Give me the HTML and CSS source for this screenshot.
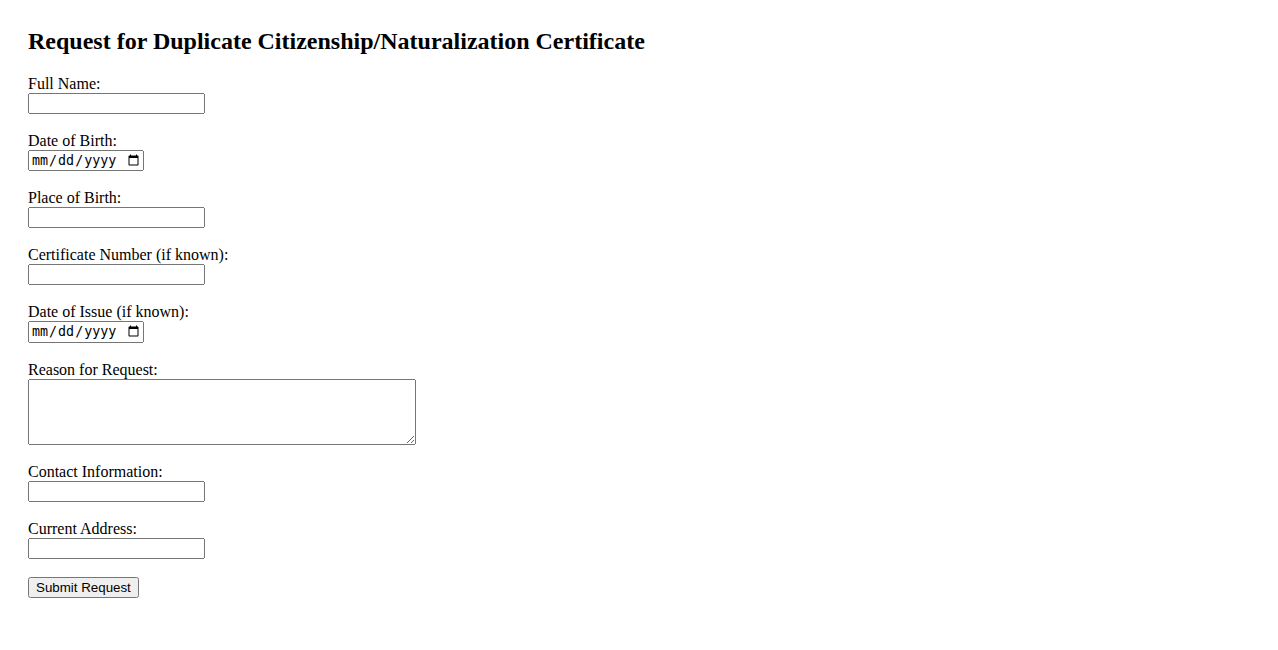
FILE: index.html
```html
<!DOCTYPE html>
<html>
<head>
<meta charset="utf-8">
<link rel="stylesheet" href="styles.css">
</head>
<body>
<div class="page">
  <h2 class="title">Request for Duplicate Citizenship/Naturalization Certificate</h2>
  <form class="form">
    <div class="field"><label class="label">Full Name:</label><input class="text" type="text"></div>
    <div class="field"><label class="label">Date of Birth:</label><input class="date" type="date"></div>
    <div class="field"><label class="label">Place of Birth:</label><input class="text" type="text"></div>
    <div class="field"><label class="label">Certificate Number (if known):</label><input class="text" type="text"></div>
    <div class="field"><label class="label">Date of Issue (if known):</label><input class="date" type="date"></div>
    <div class="field"><label class="label">Reason for Request:</label><textarea class="area"></textarea></div>
    <div class="field"><label class="label">Contact Information:</label><input class="text" type="text"></div>
    <div class="field"><label class="label">Current Address:</label><input class="text" type="text"></div>
    <div class="field"><button class="submit" type="submit">Submit Request</button></div>
  </form>
</div>
</body>
</html>
```

FILE: styles.css
```css
body {
  margin: 8px;
  font-family: "Liberation Serif", "Times New Roman", serif;
  font-size: 16px;
  color: #000;
  background: #fff;
}
.page {
  padding: 20px;
}
.title {
  font-size: 24px;
  font-weight: bold;
  margin: 0 0 20px 0;
}
.field {
  margin-bottom: 18px;
}
.label {
  display: block;
}
.text, .date {
  display: block;
  margin: 0;
  box-sizing: border-box;
}
.text {
  width: 177px;
  height: 21px;
}
.date {
  width: 116px;
}
.area {
  display: block;
  margin: 0;
  width: 388px;
  height: 66px;
  box-sizing: border-box;
}
.submit {
  margin: 0;
}
```
